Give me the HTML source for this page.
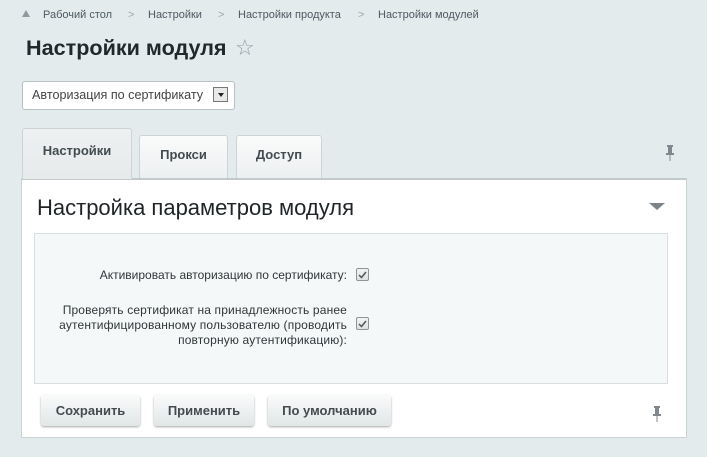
<!DOCTYPE html><html><head><meta charset="utf-8"><style>
body{margin:0;width:707px;height:457px;background:#e4ebed;font-family:"Liberation Sans",Arial,sans-serif;position:relative;overflow:hidden}
.a{position:absolute}
.bc{top:9px;font-size:11px;color:#4c5a60}
.tab{position:absolute;border:1px solid #cdd4d6;border-bottom:none;border-radius:3px 3px 0 0;background:linear-gradient(#fafbfb,#eceff0);font-weight:bold;font-size:13px;color:#424b4f;text-align:center;box-sizing:border-box}
.btn{position:absolute;top:395px;height:31px;border-radius:3px;background:linear-gradient(#fafbfb,#e1e6e7);box-shadow:0 1px 2px rgba(0,0,0,.35);font-weight:bold;font-size:13px;color:#434b4f;line-height:31px;text-align:center}
.cb{position:absolute;width:13px;height:13px;border:1px solid #8e9597;border-radius:2px;background:linear-gradient(#f2f4f4,#dde1e2);box-sizing:border-box}
.lab{position:absolute;right:360px;font-size:12px;color:#303538;text-align:right;line-height:15px}
</style></head><body>
<div class="a" style="left:22px;top:10px;width:0;height:0;border-left:4px solid transparent;border-right:4px solid transparent;border-bottom:7px solid #8e9a9f"></div>
<div class="a bc" style="left:43px">Рабочий стол</div>
<div class="a bc" style="left:128px;color:#9aa">&gt;</div>
<div class="a bc" style="left:148px">Настройки</div>
<div class="a bc" style="left:218px;color:#9aa">&gt;</div>
<div class="a bc" style="left:238px">Настройки продукта</div>
<div class="a bc" style="left:358px;color:#9aa">&gt;</div>
<div class="a bc" style="left:378px">Настройки модулей</div>
<div class="a" style="left:26px;top:35px;font-size:21.6px;font-weight:bold;color:#20282c">Настройки модуля</div>
<div class="a" style="left:235px;top:36px;font-size:22px;color:#939ca0;font-family:'DejaVu Sans',sans-serif">☆</div>
<div class="a" style="left:22px;top:81px;width:211px;height:27px;border:1px solid #b8c0c3;border-radius:3px;background:#fff;font-size:12.6px;color:#444;line-height:27px;box-sizing:content-box"><span style="margin-left:9px">Авторизация по сертификату</span>
<div class="a" style="left:190px;top:5px;width:15px;height:15px;border:1px solid #777;background:#e8e8e8;box-sizing:border-box"><div style="margin:5px auto 0;width:0;height:0;border-left:3px solid transparent;border-right:3px solid transparent;border-top:4px solid #222"></div></div></div>
<div class="tab" style="left:22px;top:128px;width:110px;height:51px;background:linear-gradient(#eef1f2,#e6eaeb);line-height:44px;z-index:2">Настройки</div>
<div class="tab" style="left:139px;top:135px;width:89px;height:44px;line-height:38px">Прокси</div>
<div class="tab" style="left:236px;top:135px;width:86px;height:44px;line-height:38px">Доступ</div>
<svg class="a" style="left:664px;top:144px" width="12" height="18"><rect x="3" y="1" width="6" height="2" fill="#7f898d"/><rect x="4" y="3" width="4" height="6" fill="#7f898d"/><rect x="2" y="9" width="8" height="2" fill="#7f898d"/><rect x="5.5" y="11" width="1" height="6" fill="#7f898d"/></svg>
<div class="a" style="left:21px;top:178px;width:666px;height:260px;background:#fff;border:1px solid #ccd3d5;border-top:2px solid #c3cacc;box-sizing:border-box"></div>
<div class="a" style="left:37px;top:195px;font-size:22px;color:#1e2427">Настройка параметров модуля</div>
<div class="a" style="left:649px;top:203px;width:0;height:0;border-left:8px solid transparent;border-right:8px solid transparent;border-top:7px solid #7b8488"></div>
<div class="a" style="left:34px;top:233px;width:634px;height:151px;background:#f5f8f8;border:1px solid #d9dfe0;box-sizing:border-box"></div>
<div class="lab" style="top:268px">Активировать авторизацию по сертификату:</div>
<div class="cb" style="left:356px;top:268px"><svg width="11" height="11" style="display:block"><path d="M2 6l2.5 2.5L9 3" stroke="#555" stroke-width="1.5" fill="none"/></svg></div>
<div class="lab" style="top:303px;letter-spacing:0.15px">Проверять сертификат на принадлежность ранее<br>аутентифицированному пользователю (проводить<br>повторную аутентификацию):</div>
<div class="cb" style="left:356px;top:317px"><svg width="11" height="11" style="display:block"><path d="M2 6l2.5 2.5L9 3" stroke="#555" stroke-width="1.5" fill="none"/></svg></div>
<div class="btn" style="left:41px;width:99px">Сохранить</div>
<div class="btn" style="left:154px;width:100px">Применить</div>
<div class="btn" style="left:268px;width:123px">По умолчанию</div>
<svg class="a" style="left:651px;top:405px" width="12" height="18"><rect x="3" y="1" width="6" height="2" fill="#7f898d"/><rect x="4" y="3" width="4" height="6" fill="#7f898d"/><rect x="2" y="9" width="8" height="2" fill="#7f898d"/><rect x="5.5" y="11" width="1" height="6" fill="#7f898d"/></svg>
</body></html>
